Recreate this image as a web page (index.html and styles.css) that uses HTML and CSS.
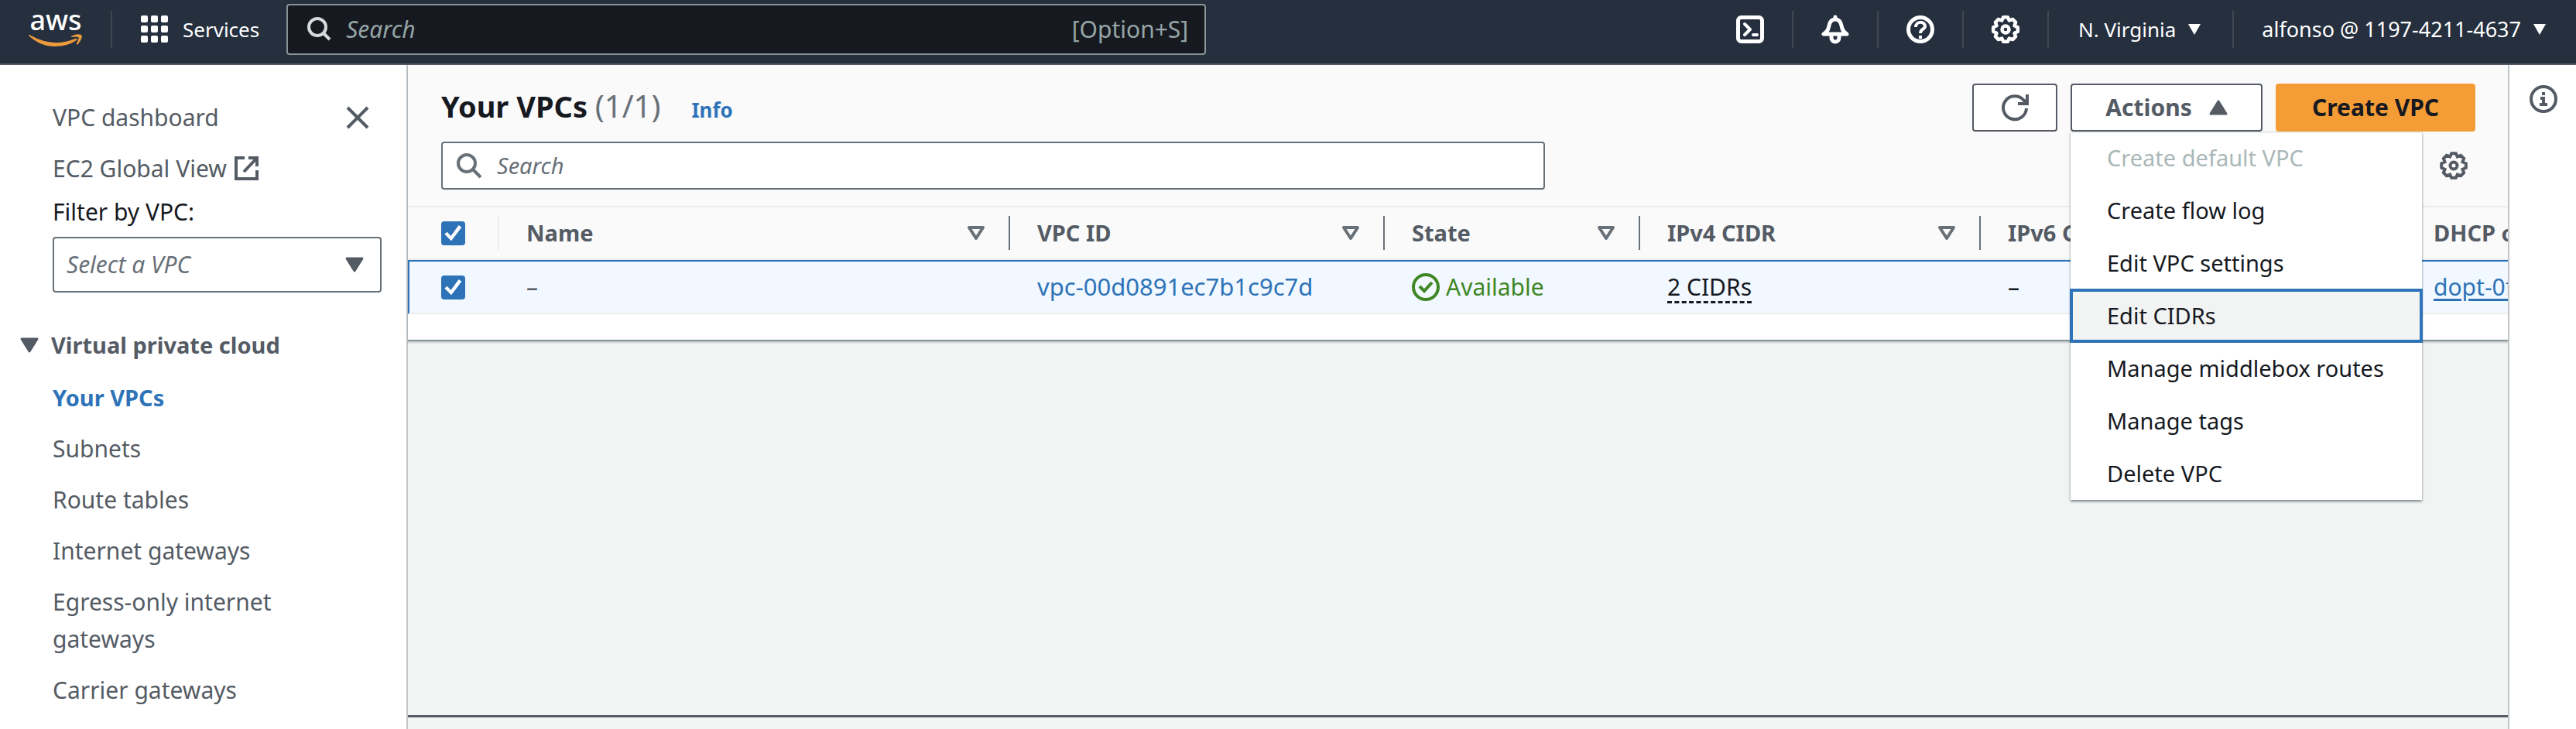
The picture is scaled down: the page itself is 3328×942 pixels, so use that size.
FILE: index.html
```html
<!DOCTYPE html>
<html lang="en">
<head>
<meta charset="utf-8">
<title>Your VPCs | VPC Console</title>
<link rel="stylesheet" href="styles.css">
</head>
<body>
<header class="topbar">
  <a class="logo" href="#" aria-label="AWS home">
    <span class="logo-text">aws</span>
    <svg class="logo-smile" viewBox="0 0 70 18" aria-hidden="true"><path d="M0 2Q1 0 3 2Q32 18 60 6Q64 5 62 8Q50 16 34 16Q15 16 0 2Z M55 3Q61-1 68 1Q71 3 64 13Q61 15 62 12Q66 4 64 4Q62 3 55 4Z"/></svg>
  </a>
  <span class="bar-divider"></span>
  <button class="services" type="button">
    <svg class="icon-36" viewBox="0 0 36 36" fill="currentColor" aria-hidden="true"><rect width="9" height="9" rx="2"/><rect x="13" width="9" height="9" rx="2"/><rect x="26" width="9" height="9" rx="2"/><rect y="13" width="9" height="9" rx="2"/><rect x="13" y="13" width="9" height="9" rx="2"/><rect x="26" y="13" width="9" height="9" rx="2"/><rect y="26" width="9" height="9" rx="2"/><rect x="13" y="26" width="9" height="9" rx="2"/><rect x="26" y="26" width="9" height="9" rx="2"/></svg>
    Services
  </button>
  <div class="global-search">
    <svg class="icon-32" viewBox="0 0 32 32" fill="none" stroke="currentColor" stroke-width="4" aria-hidden="true"><circle cx="13" cy="13" r="11"/><path d="M20 20L29 29"/></svg>
    <input type="text" placeholder="Search" aria-label="Search services">
    <span class="shortcut">[Option+S]</span>
  </div>
  <nav class="tools" aria-label="Account tools">
    <button class="tool" type="button" aria-label="CloudShell"><svg class="icon-36" viewBox="0 0 36 36" fill="none" stroke="currentColor" stroke-width="4" stroke-linecap="round" stroke-linejoin="round" aria-hidden="true"><rect x="2.500" y="2.500" width="31" height="31" rx="4" stroke-width="5"/><path d="M11 11L18 18L11 25"/><path d="M22 25h5"/></svg></button>
    <button class="tool" type="button" aria-label="Notifications"><svg class="icon-36" viewBox="0 0 36 36" fill="none" stroke="currentColor" stroke-width="5" stroke-linecap="round" stroke-linejoin="round" aria-hidden="true"><path d="M18 2V5M3 24H33C27 20 27 17 26 13C25 8 22 5 18 5S11 8 10 13C9 17 9 20 3 24Z"/><path d="M13 25V29A5 5 0 0 0 23 29V25"/></svg></button>
    <button class="tool" type="button" aria-label="Help"><svg class="icon-36" viewBox="0 0 36 36" fill="none" stroke="currentColor" stroke-width="5" aria-hidden="true"><circle cx="18" cy="18" r="15.500"/><path stroke-width="4" d="M12 15C12 7 24 7 24 14C24 18 18 17 18 23M18 26v4"/></svg></button>
    <button class="tool" type="button" aria-label="Settings"><svg class="icon-36" viewBox="0 0 36 36" fill="none" stroke="currentColor" stroke-width="4.500" stroke-linejoin="round" aria-hidden="true"><path d="M15.200 2.200L20.800 2.200L22.800 6.500L27.200 4.900L31.100 8.800L29.500 13.200L33.800 15.200V20.800L29.500 22.800L31.100 27.200L27.200 31.100L22.800 29.500L20.800 33.800H15.200L13.200 29.500L8.800 31.100L4.900 27.200L6.500 22.800L2.200 20.800V15.200L6.500 13.200L4.900 8.800L8.800 4.900L13.200 6.500Z"/><circle cx="18" cy="18" r="4.500"/></svg></button>
    <button class="menu-button region" type="button">N. Virginia <svg class="caret-small" viewBox="0 0 18 16" aria-hidden="true"><path d="M1 1H17L9 15Z"/></svg></button>
    <button class="menu-button account" type="button">alfonso @ 1197-4211-4637 <svg class="caret-small" viewBox="0 0 18 16" aria-hidden="true"><path d="M1 1H17L9 15Z"/></svg></button>
  </nav>
</header>

<div class="layout">
  <aside class="sidebar">
    <div class="sidebar-head">
      <a href="#">VPC dashboard</a>
      <button class="close" type="button" aria-label="Close navigation"><svg class="icon-32" viewBox="0 0 32 32" fill="none" stroke="currentColor" stroke-width="4" aria-hidden="true"><path d="M3 3L29 29M29 3L3 29"/></svg></button>
    </div>
    <a class="external" href="#">EC2 Global View <svg class="icon-32" viewBox="0 0 32 32" fill="none" stroke="currentColor" stroke-width="4" aria-hidden="true"><path d="M13 2H2V29H29V18M18 2H29V13M29 2L12 20"/></svg></a>
    <label class="filter-label" for="vpc-filter">Filter by VPC:</label>
    <div class="select-wrap">
      <select id="vpc-filter"><option>Select a VPC</option></select>
      <svg class="caret" viewBox="0 0 24 20" aria-hidden="true"><path d="M2 2H22L12 18Z"/></svg>
    </div>
    <button class="section" type="button"><svg class="caret" viewBox="0 0 24 20" aria-hidden="true"><path d="M2 2H22L12 18Z"/></svg>Virtual private cloud</button>
    <nav class="side-links" aria-label="Virtual private cloud">
      <a class="current" href="#">Your VPCs</a>
      <a href="#">Subnets</a>
      <a href="#">Route tables</a>
      <a href="#">Internet gateways</a>
      <a href="#">Egress-only internet gateways</a>
      <a href="#">Carrier gateways</a>
    </nav>
  </aside>

  <main class="content">
    <section class="panel">
      <div class="panel-head">
        <div class="title-row">
          <h1>Your VPCs <span class="count">(1/1)</span></h1>
          <a class="info" href="#">Info</a>
          <div class="actions">
            <button class="btn btn-icon" type="button" aria-label="Refresh"><svg class="icon-36" viewBox="0 0 36 36" fill="none" stroke="currentColor" stroke-width="4" aria-hidden="true"><path d="M33 19A15 15 0 1 1 29 8L33 12M34 1V13H22"/></svg></button>
            <div class="dropdown">
              <button class="btn btn-menu" type="button" aria-expanded="true">Actions <svg class="caret" viewBox="0 0 24 20" aria-hidden="true"><path d="M2 18H22L12 2Z"/></svg></button>
              <div class="menu" role="menu">
                <button type="button" role="menuitem" disabled>Create default VPC</button>
                <button type="button" role="menuitem">Create flow log</button>
                <button type="button" role="menuitem">Edit VPC settings</button>
                <button class="active" type="button" role="menuitem">Edit CIDRs</button>
                <button type="button" role="menuitem">Manage middlebox routes</button>
                <button type="button" role="menuitem">Manage tags</button>
                <button type="button" role="menuitem">Delete VPC</button>
              </div>
            </div>
            <button class="btn btn-primary" type="button">Create VPC</button>
          </div>
        </div>
        <div class="search-row">
          <div class="table-search">
            <svg class="icon-32" viewBox="0 0 32 32" fill="none" stroke="currentColor" stroke-width="4" aria-hidden="true"><circle cx="13" cy="13" r="11"/><path d="M20 20L31 31"/></svg>
            <input type="text" placeholder="Search" aria-label="Search VPCs">
          </div>
          <button class="preferences" type="button" aria-label="Preferences"><svg class="icon-36" viewBox="0 0 36 36" fill="none" stroke="currentColor" stroke-width="4" stroke-linejoin="miter" aria-hidden="true"><path d="M15.200 2.200L20.800 2.200L22.800 6.500L27.200 4.900L31.100 8.800L29.500 13.200L33.800 15.200V20.800L29.500 22.800L31.100 27.200L27.200 31.100L22.800 29.500L20.800 33.800H15.200L13.200 29.500L8.800 31.100L4.900 27.200L6.500 22.800L2.200 20.800V15.200L6.500 13.200L4.900 8.800L8.800 4.900L13.200 6.500Z"/><circle cx="18" cy="18" r="4.500"/></svg></button>
        </div>
      </div>
      <div class="table-scroll">
        <table>
          <colgroup><col class="c-check"><col class="c-name"><col class="c-id"><col class="c-state"><col class="c-v4"><col class="c-v6"><col class="c-dhcp"></colgroup>
          <thead>
            <tr>
              <th><div class="th light"><input type="checkbox" checked aria-label="Select all VPCs"></div></th>
              <th><div class="th">Name <svg class="caret sort" viewBox="0 0 24 20" aria-hidden="true"><path d="M3 3H21L12 17Z"/></svg></div></th>
              <th><div class="th">VPC ID <svg class="caret sort" viewBox="0 0 24 20" aria-hidden="true"><path d="M3 3H21L12 17Z"/></svg></div></th>
              <th><div class="th">State <svg class="caret sort" viewBox="0 0 24 20" aria-hidden="true"><path d="M3 3H21L12 17Z"/></svg></div></th>
              <th><div class="th">IPv4 CIDR <svg class="caret sort" viewBox="0 0 24 20" aria-hidden="true"><path d="M3 3H21L12 17Z"/></svg></div></th>
              <th><div class="th">IPv6 CIDR</div></th>
              <th><div class="th">DHCP option set</div></th>
            </tr>
          </thead>
          <tbody>
            <tr>
              <td><input type="checkbox" checked aria-label="Select vpc-00d0891ec7b1c9c7d"></td>
              <td class="muted">–</td>
              <td><a class="vpc-link" href="#">vpc-00d0891ec7b1c9c7d</a></td>
              <td><span class="status"><svg class="icon-36" viewBox="0 0 36 36" fill="none" stroke="currentColor" stroke-width="4" aria-hidden="true"><circle cx="18" cy="18" r="16"/><path d="M10 17L16 23L26 12"/></svg>Available</span></td>
              <td><button class="popover-link" type="button">2 CIDRs</button></td>
              <td>–</td>
              <td><a class="dhcp-link" href="#">dopt-0f</a></td>
            </tr>
          </tbody>
        </table>
      </div>
    </section>
    <div class="split"></div>
  </main>

  <aside class="info-rail">
    <button type="button" aria-label="Open help panel"><svg class="icon-36" viewBox="0 0 36 36" fill="none" stroke="currentColor" stroke-width="4" aria-hidden="true"><circle cx="18" cy="18" r="16"/><path d="M18 9v4M14 17h4v8M13 25h10"/></svg></button>
  </aside>
</div>
</body>
</html>
```

FILE: styles.css
```css
* { box-sizing: border-box; }

body {
  margin: 0;
  height: 100vh;
  display: flex;
  flex-direction: column;
  overflow: hidden;
  font-family: "Noto Sans", "Open Sans", sans-serif;
  font-size: 30px;
  line-height: 48px;
  color: #16191f;
  background: #f2f3f3;
}

button, input, select { font: inherit; color: inherit; }
button { margin: 0; padding: 0; border: 0; background: none; cursor: pointer; white-space: nowrap; }
a { color: inherit; text-decoration: none; }
svg { flex: none; display: block; overflow: visible; }

.icon-36 { width: 36px; height: 36px; }
.icon-32 { width: 32px; height: 32px; }
.caret { width: 24px; height: 20px; fill: #545b64; stroke: #545b64; stroke-width: 3px; stroke-linejoin: round; }
.caret.sort { fill: none; stroke: #687078; stroke-width: 4px; }
.caret-small { width: 18px; height: 16px; fill: currentColor; }

/* Top bar */
.topbar {
  flex: none;
  display: flex;
  align-items: center;
  height: 84px;
  padding: 0 38px 6px 37px;
  border-bottom: 2px solid #545b64;
  background: #252f3e;
  color: #fff;
  font-size: 26px;
}
.logo { display: flex; flex-direction: column; align-items: center; gap: 6px; width: 70px; }
.logo-text { font-size: 36px; line-height: 24px; font-weight: 500; }
.logo-smile { width: 70px; height: 18px; fill: #ec9a3c; }
.bar-divider { width: 2px; height: 48px; margin: 0 37px 0 36px; background: #414750; }
.services { display: flex; align-items: center; gap: 18px; }
.global-search {
  display: flex;
  align-items: center;
  gap: 18px;
  flex: 0 1 1188px;
  height: 66px;
  margin-left: 35px;
  padding: 0 21px 0 25px;
  border: 2px solid #879596;
  border-radius: 4px;
  background: #16191f;
  color: #d5dbdb;
  font-size: 30px;
}
.global-search input { flex: 1; min-width: 0; border: 0; padding: 0; background: none; }
.global-search input::placeholder { color: #95a5a6; opacity: 1; font-style: italic; }
.shortcut { color: #95a5a6; }
.tools { display: flex; align-items: center; margin-left: auto; }
.tool { display: grid; place-items: center; width: 110px; height: 48px; border-right: 2px solid #414750; }
.menu-button { display: flex; align-items: center; gap: 15px; height: 48px; }
.region { padding: 0 40px 0 38px; border-right: 2px solid #414750; }
.account { padding-left: 36px; font-size: 27px; }

/* Page frame */
.layout { flex: 1; min-height: 0; display: flex; }

.sidebar {
  flex: none;
  width: 527px;
  padding: 44px 32px 0 68px;
  border-right: 2px solid #c2c6c9;
  background: #fff;
  color: #545b64;
}
.sidebar-head { display: flex; justify-content: space-between; align-items: center; padding-right: 15px; }
.external { display: flex; align-items: center; gap: 10px; margin-top: 18px; }
.filter-label { display: block; margin-top: 8px; color: #16191f; }
.select-wrap { display: grid; align-items: center; margin-top: 8px; }
.select-wrap > * { grid-area: 1 / 1; }
.select-wrap .caret { justify-self: end; margin-right: 23px; pointer-events: none; }
.select-wrap select {
  appearance: none;
  width: 100%;
  height: 72px;
  padding: 0 16px;
  border: 2px solid #687078;
  border-radius: 4px;
  background: #fff;
  color: #687078;
  font-style: italic;
}
.section { display: flex; align-items: center; gap: 16px; margin: 44px 0 0 -42px; font-size: 29px; font-weight: 700; }
.side-links { display: flex; flex-direction: column; gap: 18px; margin-top: 20px; padding-right: 100px; }
.side-links .current { color: #2e73b8; font-size: 29px; font-weight: 700; }

.content { flex: 1; min-width: 0; display: flex; flex-direction: column; justify-content: space-between; }
.split { height: 18px; border-top: 3px solid #545b64; }

.info-rail { flex: none; width: 88px; padding: 26px; border-left: 2px solid #c2c6c9; background: #fff; color: #545b64; }

/* VPC list */
.panel { background: #fff; border-bottom: 2px solid #879596; box-shadow: 0 2px 2px rgba(0, 28, 36, 0.2); }
.panel-head { padding: 24px 42px 21px 43px; border-bottom: 2px solid #eaeded; background: #fafafa; }
.title-row { display: flex; align-items: center; height: 62px; }
h1 { margin: 0 0 4px; font-size: 38px; font-weight: 700; }
.count { color: #687078; font-size: 40px; font-weight: 400; }
.info { margin: 6px 0 0 40px; color: #2e73b8; font-size: 26px; font-weight: 700; }
.actions { display: flex; gap: 17px; margin-left: auto; font-weight: 700; }
.btn { height: 62px; border: 2px solid #545b64; border-radius: 4px; background: #fff; color: #545b64; }
.btn-icon { display: grid; place-items: center; width: 110px; }
.btn-menu { display: flex; align-items: center; justify-content: center; gap: 22px; width: 248px; }
.btn-primary { width: 258px; border-color: #f49d37; background: #f49d37; color: #16191f; }

.dropdown { position: relative; }
.menu {
  position: absolute;
  top: 62px;
  left: 0;
  z-index: 2;
  width: 454px;
  background: #fff;
  box-shadow: 0 2px 3px rgba(0, 28, 36, 0.5), inset 0 2px 0 #eaeded;
  font-size: 29px;
  font-weight: 400;
}
.menu button { display: block; width: 100%; height: 68px; padding-left: 47px; text-align: left; color: #16191f; }
.menu button:disabled { color: #aab7b8; }
.menu .active { background: #f2f3f3; outline: 4px solid #2e73b8; outline-offset: -3px; }

.search-row { display: flex; align-items: center; justify-content: space-between; margin-top: 13px; padding-right: 10px; }
.table-search {
  display: flex;
  align-items: center;
  gap: 20px;
  width: 1426px;
  height: 62px;
  padding: 0 18px;
  border: 2px solid #687078;
  border-radius: 4px;
  background: #fff;
  color: #687078;
  font-size: 29px;
}
.table-search input { flex: 1; min-width: 0; border: 0; padding: 0; background: none; }
.table-search input::placeholder { color: #687078; opacity: 1; font-style: italic; }
.preferences { color: #545b64; }

.table-scroll { overflow: hidden; padding-bottom: 33px; }
table { width: 3000px; table-layout: fixed; border-collapse: separate; border-spacing: 0; }
.c-check { width: 118px; }
.c-name { width: 660px; }
.c-id { width: 484px; }
.c-state { width: 330px; }
.c-v4 { width: 440px; }
.c-v6 { width: 550px; }
th { height: 68px; padding: 0; border-bottom: 2px solid #eaeded; background: #fafafa; color: #545b64; font-size: 29px; text-align: left; font-weight: 700; }
.th { display: flex; align-items: center; justify-content: space-between; height: 44px; padding: 0 30px 0 35px; border-right: 2px solid #687078; }
.th.light { padding-left: 43px; border-color: #eaeded; }
td { height: 70px; padding: 0 35px; border-top: 2px solid #2e73b8; border-bottom: 2px solid #eaeded; background: #f1f8ff; white-space: nowrap; }
td:first-child { padding: 0 0 0 41px; border-left: 2px solid #2e73b8; }
.muted { color: #545b64; }

input[type="checkbox"] {
  appearance: none;
  display: block;
  width: 31px;
  height: 31px;
  margin: 0;
  border-radius: 4px;
  background: #2e73b8;
}
input[type="checkbox"]::before {
  content: "";
  display: block;
  width: 31px;
  height: 31px;
  background: #fff;
  clip-path: polygon(14% 55%, 25% 46%, 40% 63%, 73% 18%, 85% 27%, 42% 83%);
}

.vpc-link { color: #2e73b8; font-size: 31px; line-height: 40px; }
.status { display: flex; align-items: center; gap: 8px; color: #3f8624; }
.popover-link { border-bottom: 3px dashed #16191f; line-height: 36px; }
.dhcp-link { color: #2e73b8; text-decoration: underline; text-decoration-thickness: 3px; text-underline-offset: 4px; }
```
